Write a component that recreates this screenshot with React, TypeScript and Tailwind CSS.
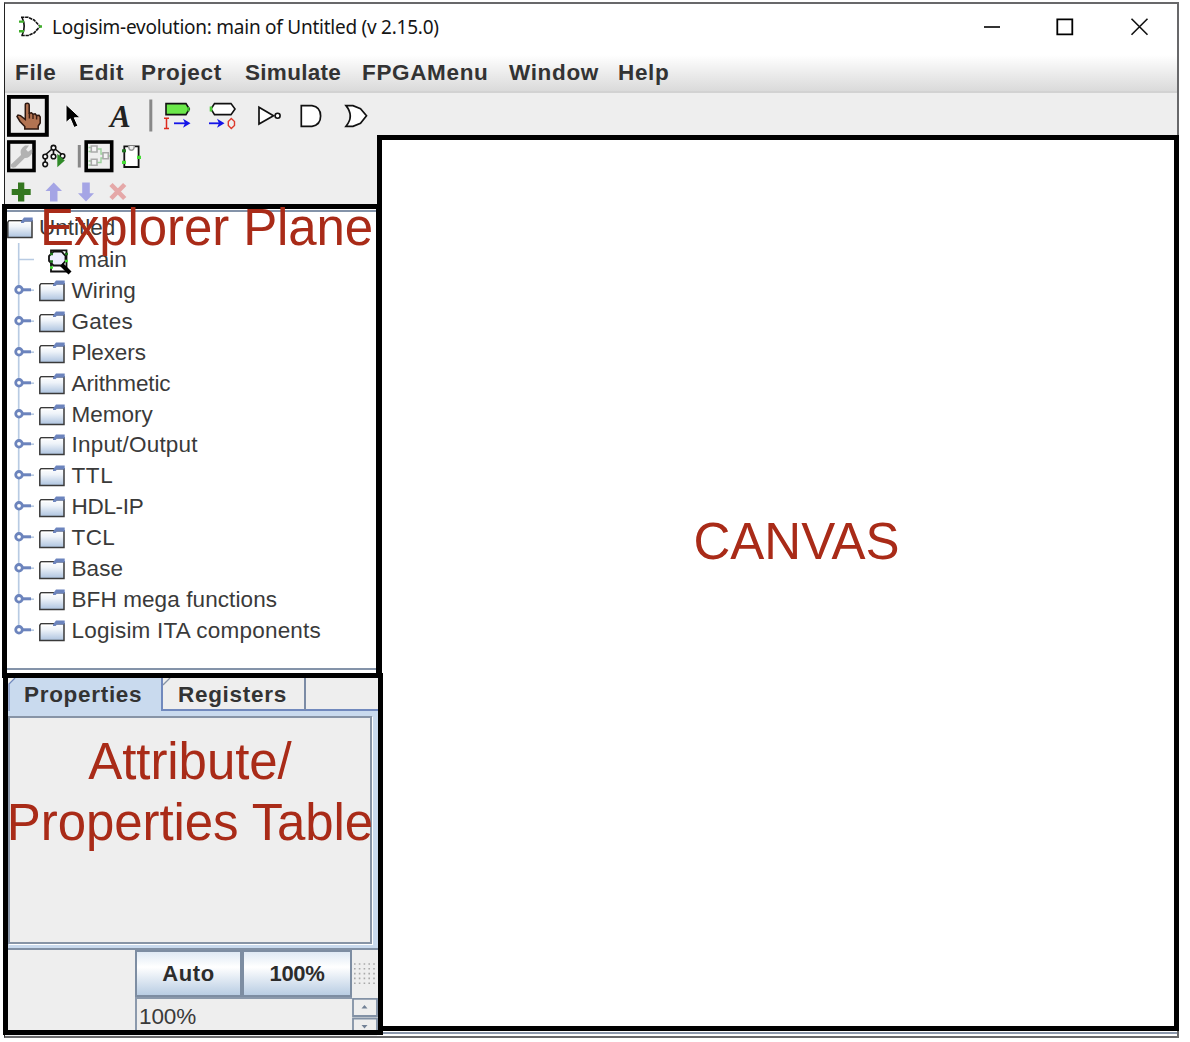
import React from "react";

type IconProps = { x: number; y: number; w: number; h: number; children: React.ReactNode };

/* Every drawing uses window coordinates through its viewBox. */
function Icon({ x, y, w, h, children }: IconProps) {
  return (
    <svg className="block shrink-0" width={w} height={h} viewBox={`${x} ${y} ${w} ${h}`} fill="none">
      {children}
    </svg>
  );
}

const menus = [
  { label: "File", cls: "w-16" },
  { label: "Edit", cls: "w-[62px]" },
  { label: "Project", cls: "w-[104px]" },
  { label: "Simulate", cls: "w-[117px] tracking-[0.3px]" },
  { label: "FPGAMenu", cls: "w-[147px]" },
  { label: "Window", cls: "w-[109px]" },
  { label: "Help", cls: "w-16" },
];

const libraries = [
  { name: "Wiring", cls: "tracking-[0.1px]" },
  { name: "Gates", cls: "tracking-[0.3px]" },
  { name: "Plexers", cls: "tracking-[-0.1px]" },
  { name: "Arithmetic", cls: "tracking-[-0.1px]" },
  { name: "Memory", cls: "tracking-[0px]" },
  { name: "Input/Output", cls: "tracking-[0.2px]" },
  { name: "TTL", cls: "tracking-[0.6px]" },
  { name: "HDL-IP", cls: "tracking-[-0.3px]" },
  { name: "TCL", cls: "tracking-[0.4px]" },
  { name: "Base", cls: "tracking-[0.1px]" },
  { name: "BFH mega functions", cls: "tracking-[0.1px]" },
  { name: "Logisim ITA components", cls: "tracking-[0.22px]" },
];

function Folder() {
  return (
    <svg className="block shrink-0" width="26" height="22" viewBox="0 0 26 22">
      <defs>
        <linearGradient id="folder" x1="0" y1="0" x2="0" y2="1">
          <stop offset="0" stopColor="#fff" />
          <stop offset="0.35" stopColor="#eef3f9" />
          <stop offset="1" stopColor="#adc3df" />
        </linearGradient>
      </defs>
      <path d="M0.8 5.2L2 3.8H25V20.5H0.8Z" fill="url(#folder)" stroke="#3a3a3a" strokeWidth="1.5" />
      <path d="M2 5.3H14" stroke="#fff" strokeWidth="1.3" />
      <path d="M14 4.6L17 0.6H25.7V4.6H18L16.6 6H14Z" fill="#6c84bd" />
    </svg>
  );
}

function TitleBar() {
  return (
    <div className="flex h-[51px] items-start bg-white pl-3">
      <Icon x={17} y={4} w={36} h={46}>
        <path d="M21 17.3H28L34 20L40 26.5L34 33L28 35.5H21" stroke="#111" strokeWidth="1.6" strokeDasharray="3.4 0.7" />
        <path d="M22 17.3Q26.5 26.4 22 35.5" stroke="#111" strokeWidth="1.6" />
        <path d="M19 21.6H24M19 31.3H24M39 26.5H42" stroke="#3fae2a" strokeWidth="2.4" />
      </Icon>
      <div className="-ml-px mt-[8px] w-[925px] whitespace-nowrap font-['Noto_Sans',sans-serif] text-[19px] leading-[30px] tracking-[-0.25px] text-[#151515]">
        Logisim-evolution: main of Untitled (v 2.15.0)
      </div>
      <Icon x={977} y={4} w={190} h={46}>
        <path d="M984 27H1000" stroke="#000" strokeWidth="1.6" />
        <path d="M1057.3 19.3H1072.3V34.3H1057.3Z" stroke="#000" strokeWidth="1.8" />
        <path d="M1131.5 18.7L1147.5 34.7M1147.5 18.7L1131.5 34.7" stroke="#111" strokeWidth="1.6" />
      </Icon>
    </div>
  );
}

function MenuBar() {
  return (
    <div className="flex h-[38px] border-b-2 border-[#d2d2d2] bg-linear-to-b from-white to-[#dadada] pl-2.5 text-[22.5px] leading-[35px] font-bold tracking-[0.65px] text-[#333]">
      {menus.map((m) => (
        <div key={m.label} className={m.cls}>
          {m.label}
        </div>
      ))}
    </div>
  );
}

function MainToolbar() {
  return (
    <div className="flex h-[42px] pt-0.5 pl-0.5">
      <Icon x={7} y={95} w={42} h={42}>
        <rect x="8.8" y="96.8" width="38" height="38" stroke="#000" strokeWidth="4" />
        <path
          d="M25.3 104.8Q25.3 103.3 27.2 103.3T29.2 104.8V113.2L31.5 112.8L33 114.2L35.2 113.8L36.5 115.4L39 115.2L40.2 117V123L38.2 126V129H24.8V126.5L20 121.5L17 116.5L18 115L20.5 115.6L25.3 119.5Z"
          fill="#b27352"
          stroke="#2c1710"
          strokeWidth="1.5"
        />
        <path d="M29.4 113V118.5M33 114V119M36.6 115.4V119.5" stroke="#3b1d12" strokeWidth="1.4" />
      </Icon>
      <Icon x={49} y={95} w={46} h={42}>
        <path d="M66 104.5V122.5L70.3 118.8L74 127.5L78 126L74.3 117.8H80.3Z" fill="#000" stroke="#fff" strokeWidth="1" />
      </Icon>
      <div className="h-10 w-[49px] pl-[15px] font-['Liberation_Serif',serif] text-[31px] leading-[43px] font-bold text-[#222] italic">
        A
      </div>
      <Icon x={144} y={95} w={12} h={42}>
        <path d="M150.8 99.5V131.5" stroke="#888" strokeWidth="3" />
      </Icon>
      <Icon x={156} y={95} w={42} h={42}>
        <path d="M166 103.6H186L189.3 109L186 114.6H166Z" fill="#6be84a" stroke="#111" strokeWidth="1.6" />
        <path d="M188.5 107V111.5" stroke="#37b626" strokeWidth="2" />
        <path d="M164 118.3H169M164 128.5H169M166.5 118.3V128.5" stroke="#dd2a1c" strokeWidth="1.5" />
        <path d="M174 123.3H188" stroke="#1414e8" strokeWidth="1.8" />
        <path d="M183 118.7L190.5 123.3L183 127.8L185 123.3Z" fill="#1414e8" />
      </Icon>
      <Icon x={198} y={95} w={48} h={42}>
        <path d="M214.5 103.6H231L235 109L231 114.6H214.5L211 109Z" fill="#fff" stroke="#111" strokeWidth="1.6" />
        <path d="M211 106.5V111.5" stroke="#4ccb35" strokeWidth="2.6" />
        <path d="M209 123.3H222" stroke="#1414e8" strokeWidth="1.8" />
        <path d="M217 118.7L224.5 123.3L217 127.8L219 123.3Z" fill="#1414e8" />
        <path d="M231.3 118.5L234.5 121.5V125.5L231.3 128.6L228.3 125.5V121.5Z" stroke="#dd3a2c" strokeWidth="1.4" />
      </Icon>
      <Icon x={246} y={95} w={44} h={42}>
        <path d="M259 107.3V124L273.5 115.7Z" fill="#fff" stroke="#111" strokeWidth="1.7" />
        <circle cx="277.6" cy="115.7" r="2.5" fill="#fff" stroke="#111" strokeWidth="1.6" />
      </Icon>
      <Icon x={290} y={95} w={44} h={42}>
        <path d="M301.3 105.6H312Q320.6 107 320.6 116T312 126.3H301.3Z" fill="#fff" stroke="#111" strokeWidth="1.7" />
      </Icon>
      <Icon x={334} y={95} w={44} h={42}>
        <path d="M346 105.6H353L360.5 108.7L366.5 115.8L360.5 123.3L353 126.3H346Q354.5 116 346 105.6Z" fill="#fff" stroke="#111" strokeWidth="1.7" />
      </Icon>
    </div>
  );
}

function ProjectToolbar() {
  const nodes: [number, number][] = [[53.5, 147.7], [45.2, 156.5], [45.2, 164.3], [53.5, 156.5], [62.5, 156]];
  return (
    <>
      <div className="flex h-[41px] pt-1 pl-0.5">
        <Icon x={7} y={139} w={32} h={36}>
          <rect x="8.5" y="142" width="25.5" height="28.5" stroke="#000" strokeWidth="3.6" />
          <path d="M11 164.5L21 155Q19.2 149 25 145.5H29L26 149.5L28 151.8L32.2 149V153Q29.5 158.3 24.8 158L15.5 167.3Q10.5 169 11 164.5Z" fill="#b2b2b2" />
        </Icon>
        <Icon x={39} y={139} w={34} h={36}>
          <path d="M45.2 155L53.5 147.7L62.5 155M53.5 148V156M45.2 156V164" stroke="#111" strokeWidth="1.6" />
          {nodes.map(([cx, cy]) => (
            <circle key={`${cx}-${cy}`} cx={cx} cy={cy} r="2.3" fill="#fff" stroke="#111" strokeWidth="1.6" />
          ))}
          <path d="M57.3 153.8V167.3L64.8 160.4Z" fill="#2f8a28" />
        </Icon>
        <Icon x={73} y={139} w={11} h={36}>
          <path d="M79.3 145V167.5" stroke="#888" strokeWidth="3" />
        </Icon>
        <Icon x={84} y={139} w={32} h={36}>
          <rect x="86.2" y="142" width="25.5" height="28.5" stroke="#000" strokeWidth="3.6" />
          <path d="M88.5 147.5H91M88.5 151.5H91M88.5 161H91M88.5 165H91M97 149H101V154H103M97 162.5H101V158H103M108 156H110" stroke="#9bd29b" strokeWidth="1.4" />
          <path d="M91.3 146H97V152H91.3ZM91.3 159.3H97V165.3H91.3ZM103 152.7H108.3V158.7H103Z" fill="#f4f4f4" stroke="#aaa" strokeWidth="1.6" />
        </Icon>
        <Icon x={116} y={139} w={30} h={36}>
          <path d="M124.3 146.3H138.6V167H124.3Z" fill="#fff" stroke="#111" strokeWidth="1.8" />
          <path d="M128.7 146Q128.7 150.3 131.4 150.3T134.3 146" fill="#eee" stroke="#999" strokeWidth="1.6" />
          <path d="M122 150.8H126" stroke="#207520" strokeWidth="3" />
          <path d="M122 162.3H126M137 157.3H141" stroke="#45dc35" strokeWidth="3.2" />
        </Icon>
      </div>
      <div className="flex h-[28px] pl-0.5">
        <Icon x={7} y={176} w={130} h={28}>
          <path d="M18 182.5H24.3V189H30.7V195H24.3V201.5H18V195H11.7V189H18Z" fill="#347720" />
          <path d="M53.7 182.5L62 191H57.5V201.5H50V191H45.5Z" fill="#a5a5e5" />
          <path d="M86 201.5L94 193.3H89.8V182.5H82.2V193.3H78Z" fill="#a5a5e5" />
          <path d="M111 184.5L124.7 198.5M124.7 184.5L111 198.5" stroke="#e5a8a8" strokeWidth="4.6" />
        </Icon>
      </div>
    </>
  );
}

function Explorer() {
  return (
    <div className="relative z-10 -ml-[3px] h-[474px] w-[379px] border-5 border-black bg-white">
      <div className="mt-px flex h-[460px] flex-col border-y-2 border-[#8493a9] text-[22.5px] leading-[32px] text-[#3a3a3a]">
        <div className="flex h-[31px]">
          <div className="mt-[5px]">
            <Folder />
          </div>
          <span className="ml-1.5 tracking-[0px]">Untitled</span>
        </div>
        <div className="flex h-[32px]">
          <Icon x={7} y={243} w={70} h={32}>
            <path d="M18.7 243V275M18.7 259.5H34" stroke="#b8cbe3" strokeWidth="1.6" />
            <path d="M51 250.3H66.5V271.5H51Z" fill="#fff" stroke="#111" strokeWidth="1.8" />
            <path d="M53.5 251.5H61.5L65.5 256V261L61.5 265.5H53.5L49 261V256Z" fill="#eef" stroke="#111" strokeWidth="1.8" />
            <path d="M61.5 264.5L70 273" stroke="#000" strokeWidth="4.2" />
            <path d="M50 254H53M50 261.5H53M65 254H68" stroke="#207520" strokeWidth="2.6" />
            <path d="M50 267.5H53M65 261H68" stroke="#45dc35" strokeWidth="2.6" />
          </Icon>
          <span className="mt-px ml-px">main</span>
        </div>
        {libraries.map(({ name, cls }, i) => (
          <div key={name} className="flex h-[30.9px] shrink-0 items-start">
            <svg className="block shrink-0" width="32" height="30.9" viewBox="0 0 32 30.9">
              <path d={i === libraries.length - 1 ? "M11.7 0V15" : "M11.7 0V31"} stroke="#b8cbe3" strokeWidth="1.7" />
              <path d="M22 15.2H27" stroke="#b8cbe3" strokeWidth="1.6" />
              <path d="M14 14.8H24" stroke="#6c84bd" strokeWidth="3" />
              <circle cx="12" cy="14.8" r="3.3" fill="#fff" stroke="#6c84bd" strokeWidth="2.8" />
            </svg>
            <div className="mt-[5px]">
              <Folder />
            </div>
            <span className={`ml-[6.5px] whitespace-nowrap ${cls}`}>{name}</span>
          </div>
        ))}
      </div>
    </div>
  );
}

const buttonCls =
  "flex h-[47px] items-center justify-center border-2 border-[#7d8da2] bg-linear-to-b from-[#dfe9f4] via-white via-35% to-[#b9cde3] text-[22px] font-bold text-[#2c2c2c]";

function Properties() {
  return (
    <div className="relative z-10 -mt-[5px] -ml-0.5 h-[362px] w-[380px] border-5 border-black bg-[#eee]">
      <div className="flex h-[33px] text-[22.5px] leading-[33px] font-bold tracking-[0.7px] text-[#333]">
        <div className="relative w-[155px] border-r-2 border-[#7189bd] bg-[#c9daee] pl-4">
          Properties
          <svg className="absolute top-0 left-0" width="8" height="33" viewBox="0 0 8 33">
            <path d="M0 0H7L1 6V33H0Z" fill="#eee" />
            <path d="M7 0L1 6V33" fill="none" stroke="#7189bd" strokeWidth="1.3" />
          </svg>
        </div>
        <div className="relative w-[143px] border-r-2 border-b-2 border-[#7b8ba5] border-b-[#7189bd] pl-[15px]">
          Registers
          <svg className="absolute top-0 left-0" width="8" height="8" viewBox="0 0 8 8">
            <path d="M7 0L0 7" stroke="#8794a6" strokeWidth="1.3" />
          </svg>
        </div>
        <div className="flex-1 border-b-2 border-[#7189bd]" />
      </div>
      <div className="h-[239px] border-b-2 border-[#8190a4] bg-[#c9daee] pt-[5px] pr-1.5">
        <div className="h-[228px] border-2 border-[#8794a6] bg-[#eee] shadow-[1px_1px_0_#fff]" />
      </div>
      <div className="flex h-20">
        <div className="w-[127px]" />
        <div className="w-[217px]">
          <div className="flex">
            <div className={`${buttonCls} w-[107px] tracking-[0.6px]`}>Auto</div>
            <div className={`${buttonCls} w-[110px] tracking-[-0.3px]`}>100%</div>
          </div>
          <div className="h-[33px] border-t-2 border-l-2 border-[#8b99ac] pl-0.5 text-[22.5px] leading-[36px] tracking-[-0.1px] text-[#3a3a3a]">
            100%
          </div>
        </div>
        <Icon x={352} y={950} w={26} h={80}>
          {[0, 1, 2, 3, 4].map((r) => (
            <path key={r} d={`M354 ${964 + r * 4.8}H377`} stroke="#aaa" strokeWidth="1.6" strokeDasharray="1.6 3.2" />
          ))}
          <path d="M353 998.8H377V1016H353ZM353 1018.5H377V1035H353Z" stroke="#8291a5" strokeWidth="1.8" />
          <path d="M361.5 1008.5L364.5 1005L367.5 1008.5ZM361.5 1025L364.5 1028.5L367.5 1025Z" fill="#728196" />
        </Icon>
      </div>
    </div>
  );
}

const noteCls = "pointer-events-none absolute z-20 whitespace-nowrap text-[51px] leading-[61px] text-[#a92b18]";

export default function App() {
  return (
    <div className="relative h-[1042px] w-[1190px] overflow-hidden bg-white pt-0.5 pl-1 font-['Liberation_Sans',Arial,sans-serif]">
      <div className="h-[1036px] w-[1175px] border-2 border-l border-[#68686a] border-l-[#222] bg-[#eee]">
        <TitleBar />
        <MenuBar />
        <MainToolbar />
        <div className="flex h-[901px] bg-[#eee]">
          <div className="w-[372px] shrink-0">
            <div className="h-[69px]">
              <ProjectToolbar />
            </div>
            <Explorer />
            <Properties />
          </div>
          <div className="relative flex h-[901px] w-[800px] flex-col bg-white">
            <div className="h-[896px] w-[802px] shrink-0 border-5 border-black bg-white" />
            <div className="mt-px h-0.5 bg-[#8c98ac]" />
          </div>
        </div>
      </div>
      <div className={`${noteCls} top-[197px] left-[40px] tracking-[-0.1px]`}>Explorer Plane</div>
      <div className={`${noteCls} top-[511px] left-[693.5px]`}>CANVAS</div>
      <div className={`${noteCls} top-[731px] left-[4px] w-[372px] text-center tracking-[-0.08px]`}>
        Attribute/
        <br />
        Properties Table
      </div>
    </div>
  );
}
